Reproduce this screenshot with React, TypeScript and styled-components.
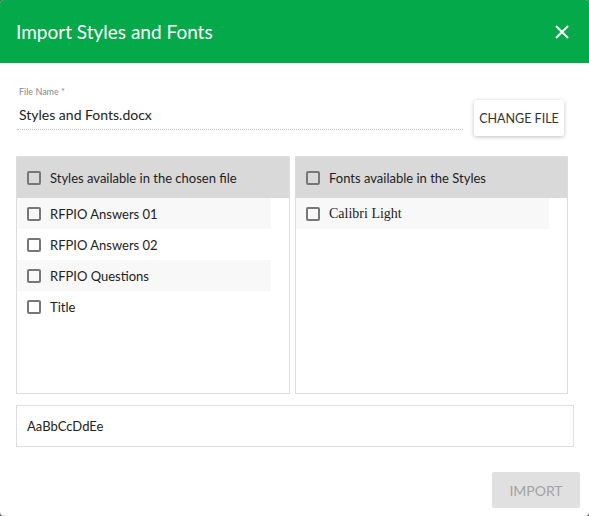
import React from "react";
import styled, { createGlobalStyle } from "styled-components";

const GlobalStyle = createGlobalStyle`
  html, body {
    margin: 0;
    padding: 0;
    background: #5a5a5a;
  }
  body {
    font-family: Lato, "Open Sans", sans-serif;
    color: #222;
  }
`;

const styleNames = ["RFPIO Answers 01", "RFPIO Answers 02", "RFPIO Questions", "Title"];
const fontNames = ["Calibri Light"];

const Checkbox = () => <CheckboxBox />;

export default function App() {
  return (
    <>
      <GlobalStyle />
      <Dialog>
        <Header>
          <Title>Import Styles and Fonts</Title>
          <CloseButton aria-label="close">
            <svg width="16" height="16" viewBox="0 0 16 16">
              <path d="M2 2 L14 14 M14 2 L2 14" stroke="#fff" strokeWidth="2" />
            </svg>
          </CloseButton>
        </Header>

        <Body>
          <FileRow>
            <FileField>
              <FieldLabel>File Name *</FieldLabel>
              <FieldValue>Styles and Fonts.docx</FieldValue>
            </FileField>
            <ChangeButton>CHANGE FILE</ChangeButton>
          </FileRow>

          <Panels>
            <Panel>
              <PanelHeader>
                <Checkbox />
                Styles available in the chosen file
              </PanelHeader>
              <List>
                {styleNames.map((name, i) => (
                  <Item key={name} $striped={i % 2 === 0}>
                    <Checkbox />
                    {name}
                  </Item>
                ))}
              </List>
            </Panel>
            <Panel>
              <PanelHeader>
                <Checkbox />
                Fonts available in the Styles
              </PanelHeader>
              <List>
                {fontNames.map((name, i) => (
                  <Item key={name} $striped={i % 2 === 0} $serif>
                    <Checkbox />
                    {name}
                  </Item>
                ))}
              </List>
            </Panel>
          </Panels>

          <Preview>AaBbCcDdEe</Preview>

          <Footer>
            <ImportButton disabled>IMPORT</ImportButton>
          </Footer>
        </Body>
      </Dialog>
    </>
  );
}

const Dialog = styled.div`
  width: 589px;
  height: 516px;
  background: #fff;
  border-radius: 4px;
  overflow: hidden;
  display: flex;
  flex-direction: column;
`;

const Header = styled.header`
  height: 63px;
  background: #04a94a;
  display: flex;
  align-items: center;
  justify-content: space-between;
  padding: 0 19px 0 16px;
  box-sizing: border-box;
`;

const Title = styled.h1`
  margin: 0;
  color: #fff;
  font-size: 19px;
  font-weight: 400;
`;

const CloseButton = styled.button`
  background: none;
  border: none;
  padding: 0;
  display: flex;
  cursor: pointer;
`;

const Body = styled.div`
  padding: 23px 9px 0 16px;
  display: flex;
  flex-direction: column;
`;

const FileRow = styled.div`
  display: flex;
  align-items: flex-start;
  padding-right: 16px;
`;

const FileField = styled.div`
  flex: 1;
  margin: 0 11px 0 1px;
  border-bottom: 1px dotted #c4c4c4;
  height: 43px;
  padding-left: 2px;
`;

const FieldLabel = styled.div`
  font-size: 9px;
  color: #888;
  line-height: 12px;
`;

const FieldValue = styled.div`
  font-size: 14px;
  line-height: 18px;
  margin-top: 8px;
  color: #222;
`;

const ChangeButton = styled.button`
  margin-top: 14px;
  width: 90px;
  height: 36px;
  padding: 0;
  border: none;
  border-radius: 2px;
  background: #fff;
  box-shadow: 0 1px 4px rgba(0, 0, 0, 0.25);
  font-family: inherit;
  font-size: 12.5px;
  color: #333;
  cursor: pointer;
`;

const Panels = styled.div`
  display: grid;
  grid-template-columns: 274px 273px;
  gap: 5px;
  margin-top: 20px;
`;

const Panel = styled.section`
  height: 238px;
  border: 1px solid #ddd;
  box-sizing: border-box;
  display: flex;
  flex-direction: column;
`;

const PanelHeader = styled.div`
  height: 41px;
  flex-shrink: 0;
  background: #d9d9d9;
  display: flex;
  align-items: center;
  gap: 9px;
  padding-left: 10px;
  font-size: 13px;
  color: #222;
`;

const List = styled.ul`
  list-style: none;
  margin: 0;
  padding: 0 18px 0 0;
`;

const Item = styled.li<{ $striped: boolean; $serif?: boolean }>`
  height: 31px;
  display: flex;
  align-items: center;
  gap: 9px;
  padding-left: 10px;
  background: ${(p) => (p.$striped ? "#f8f8f8" : "#fff")};
  font-family: ${(p) => (p.$serif ? `"Liberation Serif", serif` : "inherit")};
  font-size: ${(p) => (p.$serif ? "14px" : "13px")};
  color: #222;
`;

const CheckboxBox = styled.span`
  width: 10px;
  height: 10px;
  border: 2px solid #777;
  border-radius: 2px;
  flex-shrink: 0;
`;

const Preview = styled.div`
  margin: 11px 6px 0 0;
  height: 42px;
  border: 1px solid #ddd;
  box-sizing: border-box;
  display: flex;
  align-items: center;
  padding-left: 10px;
  font-size: 13px;
  color: #222;
`;

const Footer = styled.div`
  display: flex;
  justify-content: flex-end;
  margin-top: 25px;
`;

const ImportButton = styled.button`
  width: 88px;
  height: 36px;
  border: none;
  border-radius: 2px;
  background: #e0e0e0;
  color: #a3a3a3;
  font-family: inherit;
  font-size: 14px;
  padding: 0;
`;
